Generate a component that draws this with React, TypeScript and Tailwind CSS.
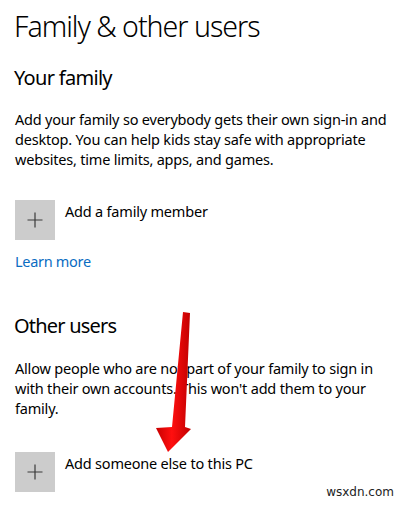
import React from "react";

function PlusTile() {
  return (
    <div className="w-10 h-10 bg-[#cccccc] flex items-center justify-center shrink-0">
      <svg width="16" height="16" viewBox="0 0 16 16">
        <path d="M8 0.5V15.5M0.5 8H15.5" stroke="#3a3a3a" strokeWidth="1.2" />
      </svg>
    </div>
  );
}

export default function App() {
  return (
    <div className="relative w-[406px] h-[505px] bg-white overflow-hidden text-[#000] font-['Noto_Sans',sans-serif]">
      <div className="pl-[14px] pt-[6px] whitespace-nowrap">
        <h1 className="text-[28.5px] leading-[40px] font-light tracking-[-1px]">Family &amp; other users</h1>
        <h2 className="mt-[18px] text-[20px] leading-[28px] font-normal tracking-[-0.7px]">Your family</h2>
        <p className="mt-[17px] text-[14.5px] leading-[20px] pl-[1px] tracking-[-0.2px]">
          Add your family so everybody gets their own sign-in and
          <br />
          desktop. You can help kids stay safe with appropriate
          <br />
          websites, time limits, apps, and games.
        </p>
        <div className="mt-[31px] flex items-start gap-[10px] pl-[1px]">
          <PlusTile />
          <span className="text-[14.5px] leading-[20px] mt-[1px] tracking-[-0.2px]">Add a family member</span>
        </div>
        <div className="mt-[11px] pl-[1px] text-[14.5px] leading-[20px] text-[#0a6cc2] tracking-[-0.3px]">Learn more</div>
        <h2 className="mt-[41px] text-[20px] leading-[28px] font-normal tracking-[-0.8px]">Other users</h2>
        <p className="mt-[18px] text-[14.5px] leading-[20px] pl-[1px] tracking-[-0.2px]">
          Allow people who are not part of your family to sign in
          <br />
          with their own accounts. This won&apos;t add them to your
          <br />
          family.
        </p>
        <div className="mt-[34px] flex items-start gap-[10px] pl-[1px]">
          <PlusTile />
          <span className="text-[14.5px] leading-[20px] mt-[1px] tracking-[-0.2px]">Add someone else to this PC</span>
        </div>
      </div>

      <svg className="absolute left-0 top-0 pointer-events-none" width="406" height="505" viewBox="0 0 406 505">
        <defs>
          <linearGradient id="ar" x1="0" y1="0" x2="1" y2="0">
            <stop offset="0" stopColor="#c80000" />
            <stop offset="0.45" stopColor="#ff0f0f" />
            <stop offset="1" stopColor="#c00000" />
          </linearGradient>
        </defs>
        <polygon
          points="183,312 190,313 185,427 191,429 168,452 156,428 172,427"
          fill="url(#ar)"
        />
      </svg>

      <div className="absolute right-[12px] bottom-[6px] text-[12px] leading-[14px] text-[#222] font-['DejaVu_Sans',sans-serif]">wsxdn.com</div>
    </div>
  );
}
